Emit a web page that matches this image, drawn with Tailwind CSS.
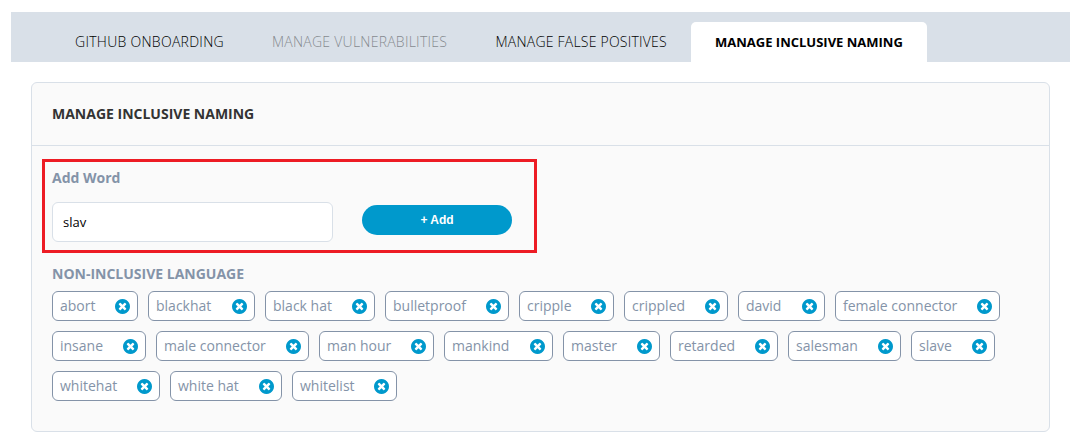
<!DOCTYPE html>
<html lang="en">
<head>
<meta charset="utf-8">
<title>Manage Inclusive Naming</title>
<script src="https://cdn.jsdelivr.net/npm/@tailwindcss/browser@4"></script>
</head>
<body class="bg-white h-[437px] overflow-hidden pt-3 pl-[11px] font-['Open_Sans','Noto_Sans',sans-serif] text-sm leading-5">
<svg class="hidden"><symbol id="x" viewBox="128 128 1536 1536"><path d="M1277 1122q0-26-19-45l-181-181 181-181q19-19 19-45 0-27-19-46l-90-90q-19-19-46-19-26 0-45 19l-181 181-181-181q-19-19-45-19-27 0-46 19l-90 90q-19 19-19 46 0 26 19 45l181 181-181 181q-19 19-19 45 0 27 19 46l90 90q19 19 46 19 26 0 45-19l181-181 181 181q19 19 45 19 27 0 46-19l90-90q19-19 19-46zm387-226q0 209-103 385.5t-279.5 279.5-385.5 103-385.5-103-279.5-279.5-103-385.5 103-385.5 279.5-279.5 385.5-103 385.5 103 279.5 279.5 103 385.5z"/></symbol></svg>
<nav class="w-[1059px] h-[50px] bg-[#d9e0e8] flex items-end pl-10 font-light text-black whitespace-nowrap">
  <a class="h-10 w-[197px] pl-6 pt-2.5 tracking-[0.28px]">GITHUB ONBOARDING</a>
  <a class="h-10 w-[223.5px] pl-6 pt-2.5 tracking-[0.25px] opacity-40">MANAGE VULNERABILITIES</a>
  <a class="h-10 w-[219.5px] pl-6 pt-2.5 tracking-[0.22px]">MANAGE FALSE POSITIVES</a>
  <a class="h-10 w-[236px] pl-6 pt-2.5 bg-white rounded-t-[5px] font-bold text-[13px]">MANAGE INCLUSIVE NAMING</a>
</nav>
<main class="relative mt-5 ml-5 w-[1019px] h-[350px] rounded-md border border-[#d9e0e8] bg-[#fafafa] text-[#8493a8]">
  <h1 class="h-[63px] border-b border-[#d9e0e8] pl-5 pt-[21px] font-bold text-[#333]">MANAGE INCLUSIVE NAMING</h1>
  <div class="pl-5 pt-[22px]">
    <h2 class="font-bold">Add Word</h2>
    <div class="mt-[14px] flex items-start">
      <div class="w-[281px] h-10 rounded-md border border-[#d9e0e8] bg-white pl-2.5 pt-[9px] text-[13px] text-black">slav</div>
      <button class="ml-[29px] mt-[3px] w-[150px] h-[30px] rounded-full bg-[#0099cc] text-white font-bold text-xs font-['Liberation_Sans',sans-serif]">+ Add</button>
    </div>
    <h2 class="mt-[22px] font-bold">NON-INCLUSIVE LANGUAGE</h2>
    <div id="tags" class="mt-[7px] flex flex-wrap gap-2.5 w-[960px]"></div>
  </div>
  <div class="absolute left-2.5 top-[76px] w-[495px] h-[94px] border-3 border-[#ed1c24]"></div>
</main>
<script>
const tags = [['abort',86],['blackhat',107],['black hat',110],['bulletproof',124],['cripple',95],['crippled',104],['david',87],['female connector',165],
['insane',94],['male connector',153],['man hour',115],['mankind',109],['master',97],['retarded',108],['salesman',113],['slave',84],
['whitehat',108],['white hat',112],['whitelist',105]];
document.getElementById('tags').innerHTML = tags.map(([t,w]) =>
`<span class="h-[30px] rounded-md border border-[#8493a8] bg-white flex items-start justify-between pl-[7px] pr-[6.7px] whitespace-nowrap" style="width:${w}px"><span class="pt-1">${t}</span><svg class="size-[15px] mt-[7px] fill-[#0099cc]"><use href="#x"/></svg></span>`).join('');
</script>
</body>
</html>
